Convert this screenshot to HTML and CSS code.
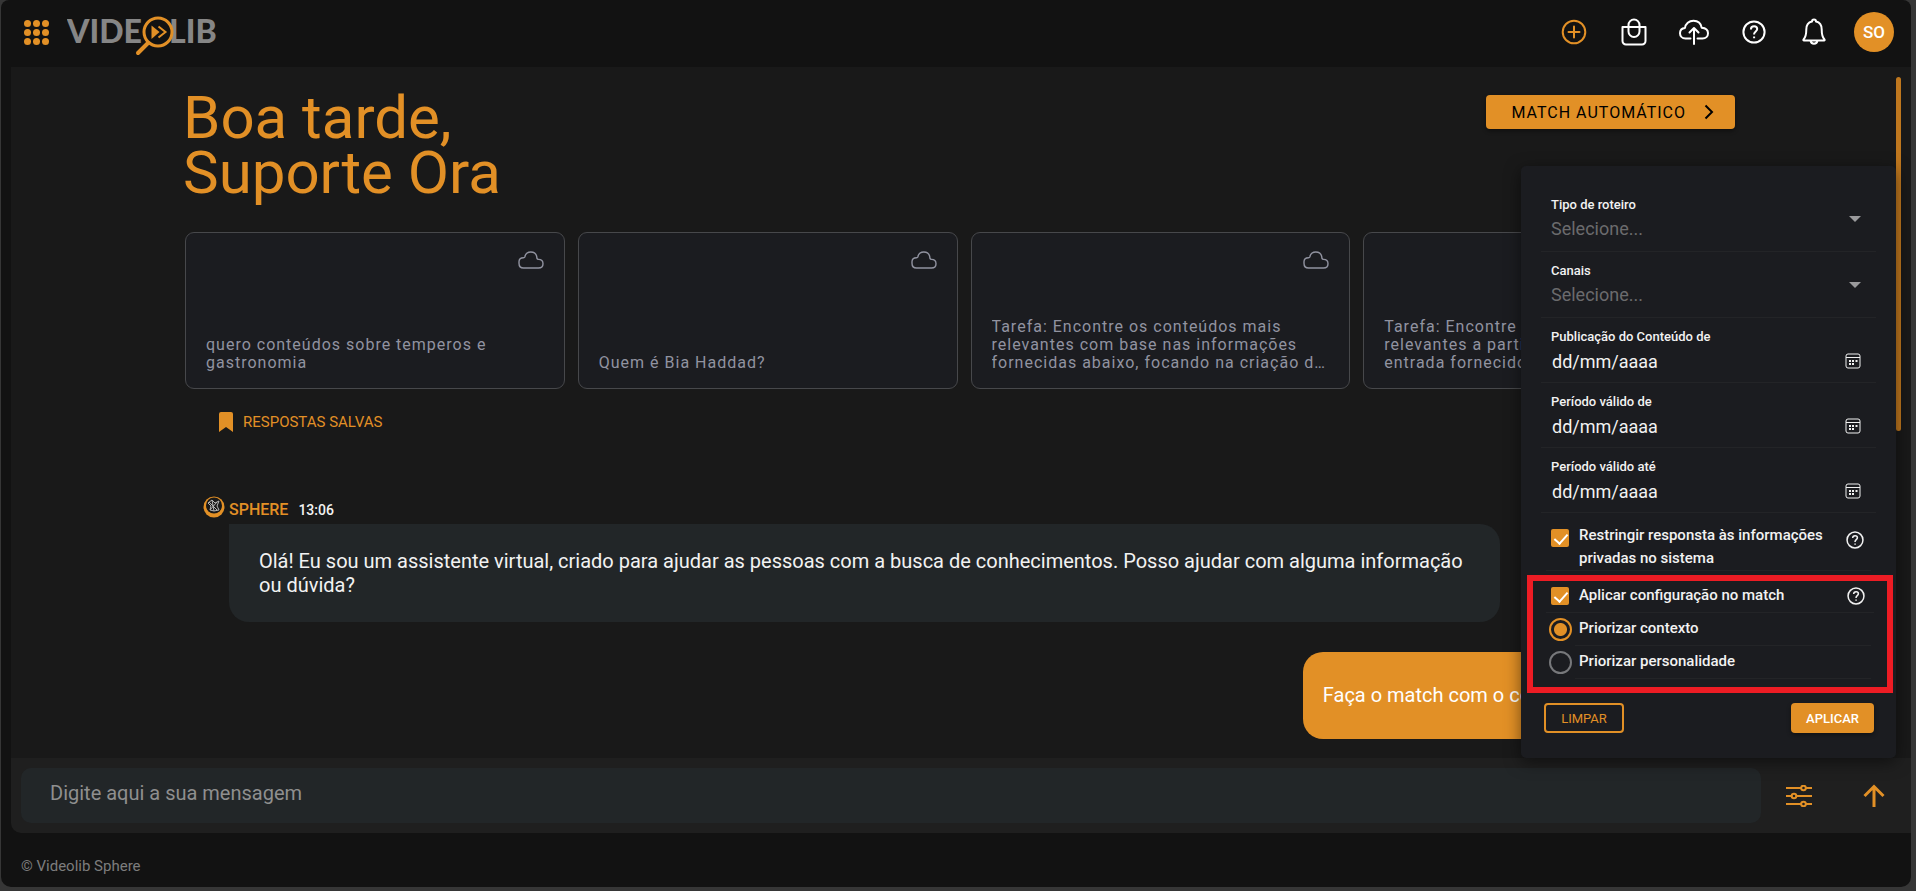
FILE: index.html
```html
<!DOCTYPE html>
<html lang="pt-BR">

<head>
    <meta charset="UTF-8">
    <meta name="viewport" content="width=device-width, initial-scale=1.0">
    <title>Videolib Sphere</title>
    <link rel="stylesheet" href="styles.css">
</head>

<body>
    <!-- Shared icons -->
    <svg class="icon-defs" aria-hidden="true">
        <symbol id="icon-help" viewBox="0 0 24 24">
            <circle cx="12" cy="12" r="10.6" />
            <path d="M8.9 9.4c0-2 1.4-3.1 3.2-3.1s3.1 1.1 3.1 2.8c0 2.3-3.1 2.5-3.1 5v.4M12.1 16.6v1.6" />
        </symbol>
        <symbol id="icon-cloud" viewBox="0 0 26 18">
            <path stroke-width="1.4" d="M5.500 17C2.700 17 1 15 1 12.200v-1.400C1 8.300 2.800 6.700 5.500 6.700 6 6.700 6.600 6.500 6.800 6 7.400 3 9.800 1 12.800 1c3.600 0 6 2.600 6.200 6.500.200.700.700.900 1.500.900 2.800 0 4.500 1.800 4.500 4.300S23.300 17 20.500 17z" />
        </symbol>
        <symbol id="icon-calendar" viewBox="0 0 16 16">
            <rect x="1" y="1" width="14" height="14" rx="2" />
            <path d="M1 4.500h14" />
            <path d="M4 8h2M7 8h2M10.500 8h2M4 11h2M7 11h2" stroke-width="2" />
        </symbol>
    </svg>

    <div class="app">
        <!-- Header -->
        <header class="topbar">
            <div class="brand">
                <button class="icon-btn" type="button" aria-label="Aplicativos">
                    <svg class="apps-icon" viewBox="0 0 25 25">
                        <circle cx="3.500" cy="3.500" r="3.500" /><circle cx="12.500" cy="3.500" r="3.500" /><circle cx="21.500" cy="3.500" r="3.500" />
                        <circle cx="3.500" cy="12.500" r="3.500" /><circle cx="12.500" cy="12.500" r="3.500" /><circle cx="21.500" cy="12.500" r="3.500" />
                        <circle cx="3.500" cy="21.500" r="3.500" /><circle cx="12.500" cy="21.500" r="3.500" /><circle cx="21.500" cy="21.500" r="3.500" />
                    </svg>
                </button>
                <a href="#" aria-label="Videolib">
                    <svg class="logo" viewBox="0 0 154 44">
                        <text class="logo-text" x="0" y="31">VIDE</text>
                        <text class="logo-text" x="102" y="31">LIB</text>
                        <circle class="logo-lens" cx="91" cy="20" r="14" />
                        <path class="logo-handle" d="M81 31l-10 10" />
                        <path class="logo-play" d="M84.500 13.500l8 6.500-8 7z" />
                        <path class="logo-chevron" d="M91.500 14.500l7 5.500-7 5.500" />
                    </svg>
                </a>
            </div>
            <nav class="top-actions">
                <button class="icon-btn accent" type="button" aria-label="Adicionar">
                    <svg class="top-icon" viewBox="0 0 32 32"><circle cx="16" cy="16" r="11.300" /><path d="M16 10.500v11M10.500 16h11" /></svg>
                </button>
                <button class="icon-btn" type="button" aria-label="Sacola">
                    <svg class="top-icon" viewBox="0 0 32 32"><path d="M4.500 11h23v14a3.500 3.500 0 0 1-3.500 3.500H8A3.500 3.500 0 0 1 4.500 25z" /><path d="M10.500 15.500V9a5.500 5.500 0 0 1 11 0v6.500a5.500 5.500 0 0 1-11 0z" /></svg>
                </button>
                <button class="icon-btn" type="button" aria-label="Enviar">
                    <svg class="top-icon" viewBox="0 0 32 32"><path d="M12.500 22.500H7.500C4 22.500 2 20 2 17.300c0-3 2-5 5-5.300C7.500 8 11 4.700 15.500 4.700c4.600 0 7.500 3.100 8.200 7C27.500 12 30 14 30 17.200c0 3.100-2.300 5.300-5.500 5.300h-5" /><path d="M16 28V12.500M11.500 16.500l4.500-4.500 4.500 4.500" /></svg>
                </button>
                <button class="icon-btn" type="button" aria-label="Ajuda">
                    <svg class="help-icon"><use href="#icon-help" /></svg>
                </button>
                <button class="icon-btn" type="button" aria-label="Notificações">
                    <svg class="top-icon" viewBox="0 0 32 32"><path d="M5.500 23.500c2.500-2.500 2.800-6 2.800-10 0-4.500 2.200-7.300 5.700-8a2 2 0 0 1 4 0c3.500.700 5.700 3.500 5.700 8 0 4 .300 7.500 2.800 10 .400.500.200 1-.400 1H6c-.700 0-.900-.500-.500-1zM12.500 24.500c.300 2 1.700 3.200 3.500 3.200s3.200-1.200 3.500-3.200" /></svg>
                </button>
                <button class="avatar" type="button">SO</button>
            </nav>
        </header>

        <!-- Conversation -->
        <main class="content">
            <div class="scroll-area">
                <div class="welcome">
                    <h1 class="greeting">Boa tarde,<br>Suporte Ora</h1>
                    <button class="match-btn" type="button">
                        MATCH AUTOMÁTICO
                        <svg viewBox="0 0 10 16"><path d="M1.500 1.500L8 8l-6.500 6.500" /></svg>
                    </button>
                </div>

                <div class="cards">
                    <a class="card" href="#">
                        <svg class="card-icon"><use href="#icon-cloud" /></svg>
                        <p class="card-text">quero conteúdos sobre temperos e gastronomia</p>
                    </a>
                    <a class="card" href="#">
                        <svg class="card-icon"><use href="#icon-cloud" /></svg>
                        <p class="card-text">Quem é Bia Haddad?</p>
                    </a>
                    <a class="card" href="#">
                        <svg class="card-icon"><use href="#icon-cloud" /></svg>
                        <p class="card-text">Tarefa: Encontre os conteúdos mais relevantes com base nas informações fornecidas abaixo, focando na criação de conteúdos</p>
                    </a>
                    <a class="card" href="#">
                        <svg class="card-icon"><use href="#icon-cloud" /></svg>
                        <p class="card-text">Tarefa: Encontre os conteúdos mais<br>relevantes a partir do texto de<br>entrada fornecido</p>
                    </a>
                </div>

                <a class="saved-link" href="#">
                    <svg viewBox="0 0 14 20"><path d="M2 0h10a2 2 0 0 1 2 2v18l-7-5-7 5V2a2 2 0 0 1 2-2z" /></svg>
                    RESPOSTAS SALVAS
                </a>

                <div class="chat">
                    <div class="message-head">
                        <svg class="sphere-icon" viewBox="0 0 22 22">
                            <circle cx="11" cy="11" r="10.500" fill="#e29026" stroke="none" />
                            <circle cx="11" cy="9.500" r="8" fill="#191919" stroke="none" />
                            <path d="M5 7l4-3 3 3 4-2-2 5 2 4-5 1-4-1 1-4zM6 6l8 8M14 6l-7 8M9 4l2 11" />
                        </svg>
                        <span class="message-author">SPHERE</span>
                        <time class="message-time">13:06</time>
                    </div>
                    <p class="bubble">Olá! Eu sou um assistente virtual, criado para ajudar as pessoas com a busca de conhecimentos. Posso ajudar com alguma informação ou dúvida?</p>
                    <p class="bubble bubble-user">Faça o match com o conteúdo</p>
                </div>
            </div>
            <div class="scrollbar"></div>

            <!-- Filters popup -->
            <form class="filters">
                <div class="field">
                    <div class="field-body">
                        <label for="tipo">Tipo de roteiro</label>
                        <select id="tipo"><option>Selecione...</option></select>
                    </div>
                    <svg class="caret" viewBox="0 0 12 6"><path d="M0 0h12L6 6z" /></svg>
                </div>
                <div class="field">
                    <div class="field-body">
                        <label for="canais">Canais</label>
                        <select id="canais"><option>Selecione...</option></select>
                    </div>
                    <svg class="caret" viewBox="0 0 12 6"><path d="M0 0h12L6 6z" /></svg>
                </div>
                <div class="field field-date">
                    <div class="field-body">
                        <label for="publicacao">Publicação do Conteúdo de</label>
                        <input id="publicacao" type="text" placeholder="dd/mm/aaaa">
                    </div>
                    <svg class="calendar"><use href="#icon-calendar" /></svg>
                </div>
                <div class="field field-date">
                    <div class="field-body">
                        <label for="valido-de">Período válido de</label>
                        <input id="valido-de" type="text" placeholder="dd/mm/aaaa">
                    </div>
                    <svg class="calendar"><use href="#icon-calendar" /></svg>
                </div>
                <div class="field field-date">
                    <div class="field-body">
                        <label for="valido-ate">Período válido até</label>
                        <input id="valido-ate" type="text" placeholder="dd/mm/aaaa">
                    </div>
                    <svg class="calendar"><use href="#icon-calendar" /></svg>
                </div>

                <div class="option option-private">
                    <input id="restringir" type="checkbox" checked>
                    <label for="restringir">Restringir responsta às informações privadas no sistema</label>
                    <svg class="option-help"><use href="#icon-help" /></svg>
                </div>

                <div class="match-config">
                    <div class="option">
                        <input id="aplicar-config" type="checkbox" checked>
                        <label for="aplicar-config">Aplicar configuração no match</label>
                        <svg class="option-help"><use href="#icon-help" /></svg>
                    </div>
                    <div class="radio-row">
                        <input id="contexto" type="radio" name="prioridade" checked>
                        <label for="contexto">Priorizar contexto</label>
                    </div>
                    <div class="radio-row">
                        <input id="personalidade" type="radio" name="prioridade">
                        <label for="personalidade">Priorizar personalidade</label>
                    </div>
                </div>

                <div class="filter-actions">
                    <button class="btn btn-outline" type="reset">LIMPAR</button>
                    <button class="btn btn-solid" type="button">APLICAR</button>
                </div>
            </form>
        </main>

        <!-- Message box -->
        <div class="composer">
            <input class="composer-input" type="text" placeholder="Digite aqui a sua mensagem" aria-label="Mensagem">
            <div class="composer-actions">
                <button class="icon-btn accent" type="button" aria-label="Filtros">
                    <svg class="sliders-icon" viewBox="0 0 26 22">
                        <path d="M0 3h15M20 3h6M0 11h5.500M10.500 11H26M0 19h15M20 19h6" />
                        <circle cx="17.500" cy="3" r="2.300" /><circle cx="8" cy="11" r="2.300" /><circle cx="17.500" cy="19" r="2.300" />
                    </svg>
                </button>
                <button class="icon-btn accent" type="button" aria-label="Enviar mensagem">
                    <svg class="send-icon" viewBox="0 0 22 24"><path d="M11 23V2.500M1.500 12L11 2.500l9.500 9.500" /></svg>
                </button>
            </div>
        </div>

        <footer class="footer">© Videolib Sphere</footer>
    </div>
</body>

</html>
```
FILE: styles.css
```css
/* Global Styles */

* {
    box-sizing: border-box;
    margin: 0;
    padding: 0;
    font-family: Roboto, "Liberation Sans", sans-serif;
}

body {
    background-color: #363636;
    height: 100vh;
    padding: 0 5px 4px 1px;
    color: #f2f2f2;
    overflow: hidden;
}

a {
    text-decoration: none;
}

button {
    border: none;
    background: none;
    cursor: pointer;
}

svg {
    display: block;
    flex: none;
    fill: none;
    stroke: currentColor;
}

.icon-defs {
    position: absolute;
    width: 0;
    height: 0;
}

.app {
    display: flex;
    flex-direction: column;
    height: 100%;
    background-color: #121212;
    border-radius: 8px 8px 10px 10px;
    overflow: hidden;
}

/* Header */

.topbar {
    display: flex;
    align-items: center;
    justify-content: space-between;
    height: 67px;
    padding: 0 17px 3px 23px;
}

.brand {
    display: flex;
    align-items: center;
    gap: 18px;
}

.apps-icon {
    width: 25px;
    height: 25px;
    fill: #e29026;
    stroke: none;
}

.logo {
    width: 154px;
    height: 44px;
    margin-top: 3px;
}

.logo-text {
    font-family: Lato, sans-serif;
    font-size: 32px;
    font-weight: 900;
    fill: #868686;
    stroke: none;
}

.logo-lens,
.logo-handle,
.logo-chevron {
    stroke: #e29026;
    stroke-width: 3;
}

.logo-lens {
    fill: #121212;
}

.logo-handle {
    stroke-width: 4;
    stroke-linecap: round;
}

.logo-chevron {
    stroke-width: 2;
}

.logo-play {
    fill: #e29026;
    stroke: none;
}

.top-actions {
    display: flex;
    align-items: center;
    gap: 20px;
}

.icon-btn {
    display: flex;
    align-items: center;
    justify-content: center;
    color: #ffffff;
}

.top-actions .icon-btn {
    width: 40px;
    height: 40px;
}

.accent,
.top-actions .accent {
    color: #e29026;
}

.top-icon {
    width: 32px;
    height: 32px;
    stroke-width: 2;
    stroke-linecap: round;
    stroke-linejoin: round;
}

.help-icon {
    width: 24px;
    height: 24px;
    stroke-width: 2;
}

.avatar {
    width: 40px;
    height: 40px;
    border-radius: 50%;
    background-color: #e29026;
    color: #ffffff;
    font-size: 17px;
    font-weight: 500;
}

/* Conversation */

.content {
    position: relative;
    flex: 1;
    min-height: 0;
    margin-left: 10px;
    background-color: #191919;
}

.scroll-area {
    height: 100%;
    padding: 23px 176px 0 172px;
    overflow: hidden;
}

.welcome {
    display: flex;
    justify-content: space-between;
    align-items: flex-start;
}

.greeting {
    color: #e29026;
    font-size: 60px;
    font-weight: 400;
    line-height: 55px;
}

.match-btn {
    display: flex;
    align-items: center;
    gap: 18px;
    height: 34px;
    margin-top: 5px;
    padding: 0 21px 0 25px;
    border-radius: 4px;
    background-color: #e29026;
    color: #000000;
    font-size: 16px;
    letter-spacing: 1px;
    box-shadow: 0 2px 4px rgba(0, 0, 0, 0.4);
}

.match-btn svg {
    width: 10px;
    height: 16px;
    stroke-width: 2;
}

.cards {
    display: flex;
    gap: 13px;
    margin: 32px 0 0 2px;
}

.card {
    flex: 0 0 24.5%;
    display: flex;
    flex-direction: column;
    justify-content: space-between;
    height: 157px;
    padding: 18px 20px 16px;
    border: 1px solid #47484b;
    border-radius: 9px;
    background-color: #1b1c20;
    color: #9193a0;
}

.card-icon {
    width: 26px;
    height: 18px;
    align-self: flex-end;
}

.card-text {
    display: -webkit-box;
    -webkit-box-orient: vertical;
    -webkit-line-clamp: 3;
    overflow: hidden;
    font-size: 16px;
    line-height: 18px;
    letter-spacing: 1px;
}

.saved-link {
    display: flex;
    align-items: center;
    gap: 10px;
    margin: 23px 0 0 36px;
    color: #e29026;
    font-size: 15px;
    line-height: 20px;
}

.saved-link svg {
    width: 14px;
    height: 20px;
    fill: #e29026;
    stroke: none;
}

.chat {
    display: flex;
    flex-direction: column;
    margin-top: 64px;
    padding: 0 0 0 20px;
}

.message-head {
    display: flex;
    align-items: baseline;
    height: 28px;
}

.sphere-icon {
    width: 22px;
    height: 22px;
    margin-right: 4px;
    align-self: flex-start;
    stroke: #b4b4b4;
    stroke-width: 1;
}

.message-author {
    margin-right: 10px;
    color: #e29026;
    font-size: 16px;
    font-weight: 500;
    line-height: 28px;
}

.message-time {
    font-size: 14px;
    font-weight: 500;
}

.bubble {
    align-self: flex-start;
    width: 1271px;
    max-width: 100%;
    margin-left: 26px;
    padding: 25px 30px;
    border-radius: 0 20px 20px 20px;
    background-color: #222628;
    font-size: 20px;
    line-height: 24px;
}

.bubble-user {
    align-self: flex-end;
    width: auto;
    margin: 30px 122px 0 0;
    padding: 31px 20px 32px;
    border-radius: 20px 0 20px 20px;
    background-color: #e29026;
    color: #ffffff;
}

.scrollbar {
    position: absolute;
    top: 10px;
    right: 10px;
    width: 5px;
    height: 354px;
    border-radius: 3px;
    background-color: #bf771e;
}

/* Filters Popup */

.filters {
    position: absolute;
    right: 15px;
    bottom: 0;
    width: 375px;
    padding: 20px 0 25px;
    border-radius: 5px;
    background-color: #1b1c20;
    box-shadow: 0 4px 16px rgba(0, 0, 0, 0.5);
    font-weight: 500;
}

.field {
    display: flex;
    align-items: center;
    justify-content: space-between;
    height: 66px;
    margin: 0 20px;
    padding: 0 15px 0 10px;
    border-bottom: 1px solid #232427;
}

.field-date {
    height: 65px;
    padding-top: 2px;
}

.field-body {
    flex: 1;
    display: flex;
    flex-direction: column;
    gap: 4px;
}

.field label {
    font-size: 13px;
    line-height: 16px;
}

.field select,
.field input {
    width: 100%;
    height: 24px;
    appearance: none;
    border: none;
    background: none;
    color: #6b6b6d;
    font-size: 18px;
    outline: none;
}

.field input {
    padding-left: 1px;
}

.field input::placeholder {
    color: #f2f2f2;
}

.caret {
    width: 12px;
    height: 6px;
    fill: #9a9a9c;
    stroke: none;
}

.calendar {
    width: 16px;
    height: 16px;
    margin-top: 20px;
}

.option {
    display: flex;
    align-items: flex-start;
    margin: 0 13px;
    padding: 3px 9px 5px 5px;
    border-bottom: 1px solid #232427;
}

.option-private {
    margin: 0 25px;
    padding: 11px 7px 0 5px;
}

.option label {
    flex: 1;
    margin-left: 10px;
    font-size: 15px;
    line-height: 23px;
}

.option input {
    position: relative;
    appearance: none;
    width: 18px;
    height: 18px;
    margin-top: 3px;
    border-radius: 2px;
    background-color: #e29026;
}

.option-private input {
    margin-top: 5px;
}

.option input:checked::after {
    content: "";
    position: absolute;
    left: 6px;
    top: 2px;
    width: 6px;
    height: 11px;
    border: solid #ffffff;
    border-width: 0 2px 2px 0;
    transform: rotate(42deg);
}

.option-help {
    width: 18px;
    height: 18px;
    margin-top: 3px;
    stroke-width: 2;
}

.option-private .option-help {
    margin-top: 7px;
}

.match-config {
    margin: 4px 3px 0 6px;
    padding-bottom: 8px;
    border: 6px solid #ed1c24;
}

.radio-row {
    display: flex;
    align-items: center;
    height: 33px;
    margin: 0 16px;
}

.radio-row label {
    flex: 1;
    height: 33px;
    margin: 0 0 0 3px;
    padding-left: 4px;
    border-bottom: 1px solid #232427;
    font-size: 15px;
    line-height: 31px;
}

.radio-row input {
    appearance: none;
    width: 23px;
    height: 23px;
    border: 2px solid #77787b;
    border-radius: 50%;
}

.radio-row input:checked {
    border-color: #e29026;
    background: radial-gradient(circle, #e29026 6px, transparent 7px);
}

.filter-actions {
    display: flex;
    justify-content: space-between;
    margin: 10px 22px 0 23px;
}

.btn {
    height: 30px;
    border-radius: 4px;
    font-size: 13px;
    font-weight: 500;
}

.btn-outline {
    width: 80px;
    border: 2px solid #e29026;
    color: #e29026;
    font-weight: 400;
}

.btn-solid {
    width: 83px;
    background-color: #e29026;
    color: #ffffff;
    box-shadow: 0 2px 4px rgba(0, 0, 0, 0.4);
}

/* Message Box */

.composer {
    display: flex;
    align-items: center;
    height: 75px;
    margin-left: 10px;
    padding: 10px;
    border-radius: 0 0 0 10px;
    background-color: #1f1f1f;
}

.composer-input {
    flex: 1;
    height: 55px;
    padding: 0 29px 6px;
    border: none;
    border-radius: 10px;
    background-color: #222628;
    color: #f2f2f2;
    font-size: 20px;
    outline: none;
}

.composer-input::placeholder {
    color: #8f8f8f;
}

.composer-actions {
    display: flex;
    align-items: center;
    gap: 51px;
    padding: 0 16px 0 25px;
}

.sliders-icon {
    width: 26px;
    height: 22px;
    stroke-width: 2;
}

.send-icon {
    width: 22px;
    height: 24px;
    stroke-width: 3;
}

.footer {
    height: 54px;
    padding: 23px 20px 0;
    color: #7d7d7d;
    font-size: 15px;
    line-height: 20px;
}
```
